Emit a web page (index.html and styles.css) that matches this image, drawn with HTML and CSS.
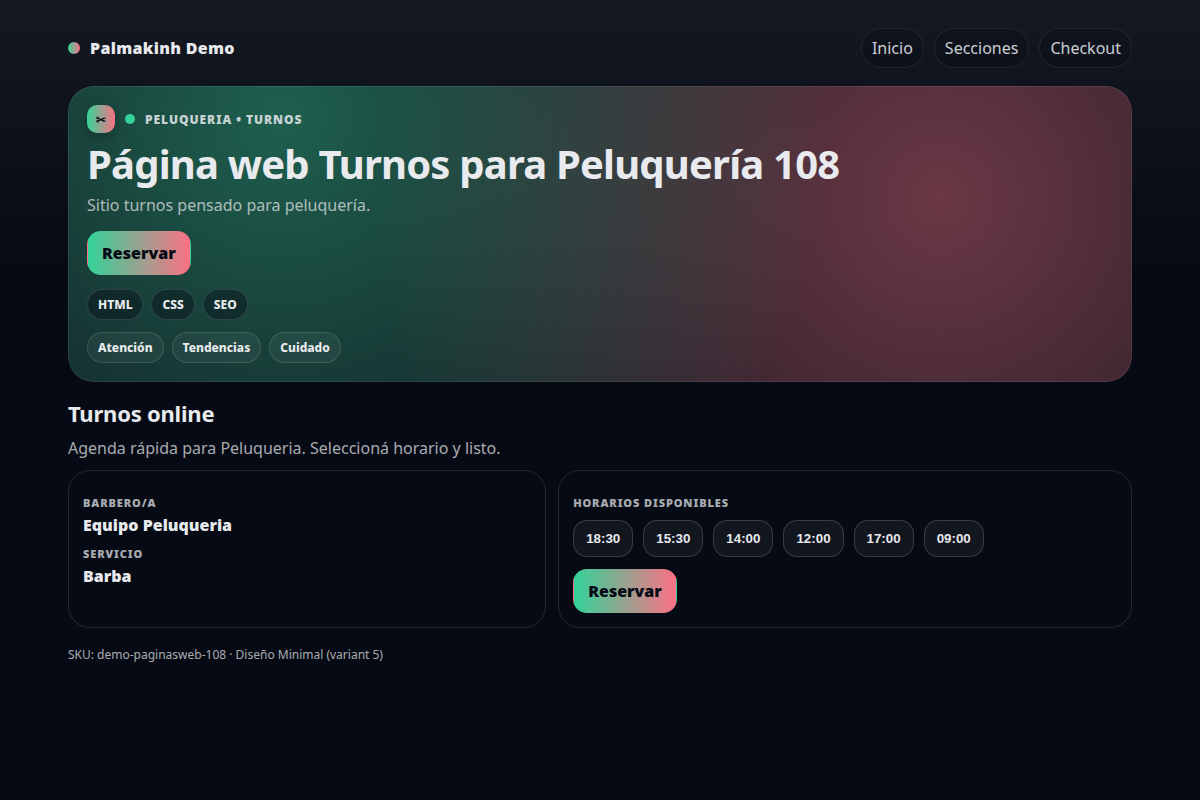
FILE: index.html
```
<!DOCTYPE html>
<html lang="es">

<head>
    <meta charset="UTF-8">
    <meta name="viewport" content="width=device-width, initial-scale=1.0">
    <title>Página web Turnos para Peluquería 108</title>
    <link rel="stylesheet" href="styles.css">
</head>

<body>
    <div class="wrap">
        <header class="top">
            <div class="brand"><span class="logo"></span>Palmakinh Demo</div>
            <nav class="nav">
                <a href="#inicio">Inicio</a>
                <a href="#turnos">Secciones</a>
                <a href="#checkout">Checkout</a>
            </nav>
        </header>

        <section class="hero" id="inicio">
            <div class="kicker">
                <span class="icon">✂</span>
                <span class="dot"></span>
                <span>PELUQUERIA • TURNOS</span>
            </div>
            <h1>Página web Turnos para Peluquería 108</h1>
            <p class="sub">Sitio turnos pensado para peluquería.</p>
            <a class="btn" href="#turnos">Reservar</a>
            <div class="chips tags">
                <span>HTML</span>
                <span>CSS</span>
                <span>SEO</span>
            </div>
            <div class="chips">
                <span>Atención</span>
                <span>Tendencias</span>
                <span>Cuidado</span>
            </div>
        </section>

        <section class="turnos" id="turnos">
            <h2>Turnos online</h2>
            <p class="sub">Agenda rápida para Peluqueria. Seleccioná horario y listo.</p>
            <div class="grid">
                <div class="card">
                    <div class="label">BARBERO/A</div>
                    <div class="value">Equipo Peluqueria</div>
                    <div class="label">SERVICIO</div>
                    <div class="value">Barba</div>
                </div>
                <div class="card">
                    <div class="label">HORARIOS DISPONIBLES</div>
                    <div class="slots">
                        <button type="button">18:30</button>
                        <button type="button">15:30</button>
                        <button type="button">14:00</button>
                        <button type="button">12:00</button>
                        <button type="button">17:00</button>
                        <button type="button">09:00</button>
                    </div>
                    <a class="btn" href="#checkout">Reservar</a>
                </div>
            </div>
        </section>

        <footer class="foot">SKU: demo-paginasweb-108 · Diseño Minimal (variant 5)</footer>
    </div>
</body>

</html>
```

FILE: styles.css
```
:root {
    --bg: #060a14;
    --text: #e8eaee;
    --muted: rgba(232, 234, 238, .72);
    --line: rgba(255, 255, 255, .12);
    --a: #34d399;
    --b: #fb7185;
}

* {
    box-sizing: border-box;
}

body {
    margin: 0;
    min-height: 100vh;
    color: var(--text);
    background: linear-gradient(180deg, rgba(255, 255, 255, .06), transparent 280px), var(--bg);
    font-family: "Noto Sans", sans-serif;
    font-size: 16px;
}

h1,
h2,
p {
    margin: 0;
}

a {
    color: inherit;
    text-decoration: none;
}

.wrap {
    max-width: 1100px;
    margin: 0 auto;
    padding: 28px 18px;
}

.top {
    display: flex;
    justify-content: space-between;
    align-items: center;
    flex-wrap: wrap;
    gap: 12px;
    margin-bottom: 18px;
}

.brand {
    display: flex;
    align-items: center;
    gap: 10px;
    font-weight: 900;
    letter-spacing: .02em;
}

.logo {
    width: 12px;
    height: 12px;
    border-radius: 50%;
    background: linear-gradient(90deg, var(--a), var(--b));
}

.nav {
    display: flex;
    flex-wrap: wrap;
    gap: 10px;
}

.nav a {
    padding: 8px 10px;
    border: 1px solid rgba(255, 255, 255, .08);
    border-radius: 999px;
    background: rgba(5, 9, 20, .3);
    color: rgba(232, 234, 238, .88);
}

.hero {
    padding: 18px;
    border: 1px solid rgba(255, 255, 255, .08);
    border-radius: 26px;
    background:
        radial-gradient(circle at 20% 10%, rgba(52, 211, 153, .4), transparent 62%),
        radial-gradient(circle at 82% 38%, rgba(251, 113, 133, .39), transparent 64%),
        linear-gradient(rgba(255, 255, 255, .04), rgba(255, 255, 255, .04)),
        var(--bg);
    background-origin: border-box;
}

.kicker {
    display: flex;
    align-items: center;
    gap: 10px;
    color: rgba(232, 234, 238, .86);
    font-size: 12px;
    font-weight: 900;
    letter-spacing: .08em;
}

.icon {
    display: grid;
    place-items: center;
    width: 28px;
    height: 28px;
    border-radius: 10px;
    background: linear-gradient(90deg, var(--a), var(--b));
    box-shadow: 0 4px 12px rgba(0, 0, 0, .25);
    color: var(--bg);
    letter-spacing: 0;
}

.dot {
    width: 10px;
    height: 10px;
    border-radius: 50%;
    background: var(--a);
}

h1 {
    margin: 10px 0 8px;
    font-size: 40px;
    line-height: 42px;
    letter-spacing: -.02em;
}

.sub {
    color: var(--muted);
    line-height: 24px;
}

.btn {
    display: inline-block;
    padding: 10px 14px;
    border: 1px solid transparent;
    border-radius: 14px;
    background: linear-gradient(90deg, var(--a), var(--b));
    color: var(--bg);
    font-weight: 900;
}

.hero .btn {
    margin-top: 14px;
}

.chips {
    display: flex;
    flex-wrap: wrap;
    gap: 8px;
    margin-top: 12px;
}

.chips span {
    padding: 6px 10px;
    border: 1px solid var(--line);
    border-radius: 999px;
    background: rgba(255, 255, 255, .05);
    font-size: 12px;
    font-weight: 800;
    line-height: 17px;
}

.tags {
    margin-top: 14px;
}

.tags span {
    border-color: rgba(255, 255, 255, .12);
    background: rgba(5, 9, 20, .4);
}

.turnos {
    margin-top: 16px;
}

h2 {
    margin-bottom: 8px;
    font-size: 22px;
    line-height: 30px;
    letter-spacing: -.01em;
}

.grid {
    display: grid;
    grid-template-columns: 1fr 1.2fr;
    gap: 12px;
    margin-top: 10px;
}

.card {
    padding: 14px;
    border: 1px solid var(--line);
    border-radius: 22px;
}

.label {
    margin: 10px 0 4px;
    color: var(--muted);
    font-size: 11px;
    font-weight: 900;
    letter-spacing: .08em;
}

.value {
    font-weight: 900;
}

.slots {
    display: flex;
    flex-wrap: wrap;
    gap: 10px;
    margin: 10px 0 12px;
}

.slots button {
    padding: 10px 12px;
    border: 1px solid rgba(255, 255, 255, .16);
    border-radius: 14px;
    background: rgba(255, 255, 255, .05);
    color: inherit;
    font-family: "Liberation Sans", Arial, sans-serif;
    font-weight: bold;
    cursor: pointer;
}

.foot {
    margin-top: 18px;
    color: var(--muted);
    font-size: 12px;
}

@media (max-width: 760px) {
    .grid {
        grid-template-columns: 1fr;
    }
}
```
